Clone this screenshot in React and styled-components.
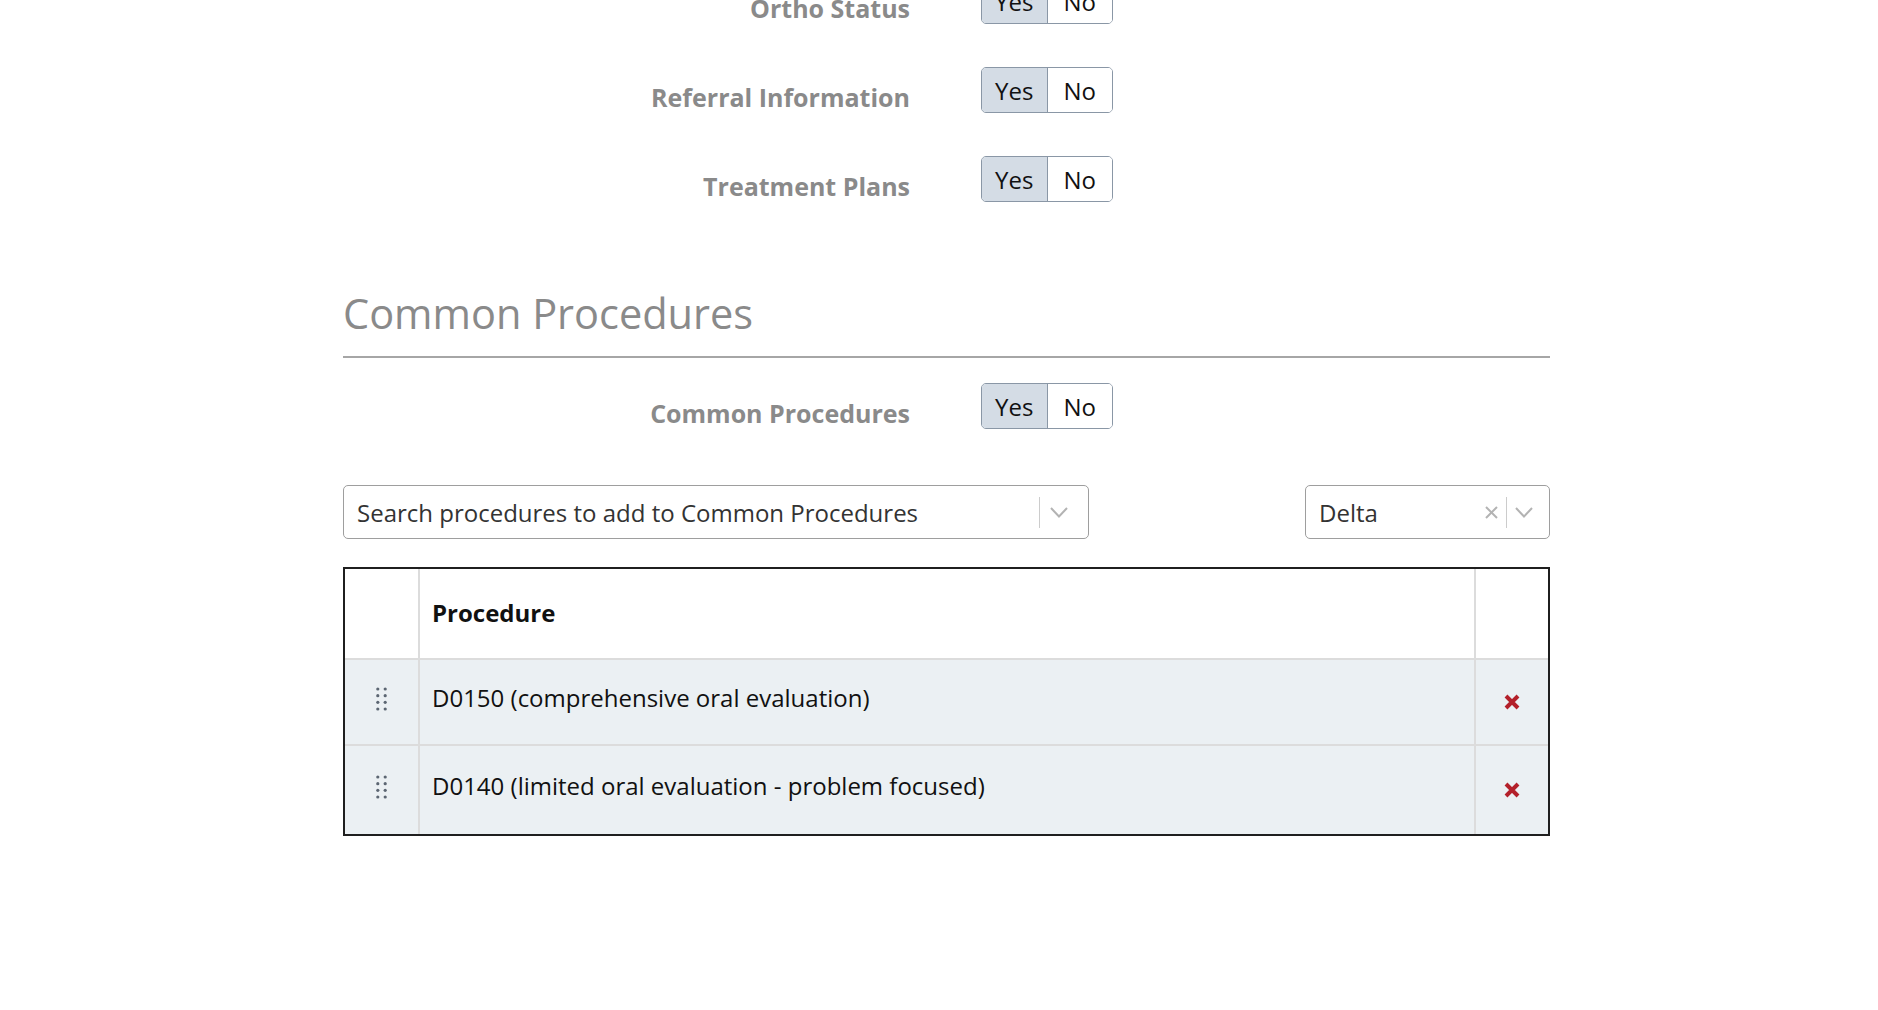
// procedure settings page
import React from 'react';
import styled, { createGlobalStyle } from 'styled-components';

const GlobalStyle = createGlobalStyle`
	html, body {
		margin: 0;
		padding: 0;
		background: #ffffff;
		font-family: 'Open Sans', 'Noto Sans', sans-serif;
		color: #111111;
	}
	* {
		box-sizing: border-box;
	}
`;

const Page = styled.div`
	width: 1207px;
	margin-left: 343px;
	padding-bottom: 80px;
`;

const Form = styled.div`
	display: flex;
	flex-direction: column;
	gap: 43px;
	margin-top: ${(p) => p.offset || 0}px;
`;

const FieldRow = styled.div`
	display: grid;
	grid-template-columns: 567px auto;
	column-gap: 71px;
	align-items: start;
	height: 46px;
`;

const Label = styled.div`
	text-align: right;
	font-size: 25px;
	line-height: 34px;
	font-weight: 700;
	color: #8a8a8a;
	padding-top: 13px;
	white-space: nowrap;
`;

const Toggle = styled.div`
	display: flex;
	width: 132px;
	height: 46px;
	border: 1px solid #8a97a6;
	border-radius: 5px;
	overflow: hidden;
`;

const ToggleOption = styled.button`
	flex: 1;
	border: none;
	border-right: ${(p) => (p.first ? '1px solid #8a97a6' : 'none')};
	background: ${(p) => (p.active ? '#d4dce5' : '#ffffff')};
	font-family: inherit;
	font-size: 24px;
	color: #111111;
	padding: 0;
	cursor: pointer;
`;

const Heading = styled.h2`
	margin: 84px 0 0;
	padding-bottom: 16px;
	border-bottom: 2px solid #a6a6a6;
	font-size: 41.5px;
	line-height: 54px;
	font-weight: 400;
	color: #8a8a8a;
`;

const SearchBar = styled.div`
	display: flex;
	justify-content: space-between;
	margin-top: 56px;
`;

const Select = styled.div`
	display: flex;
	align-items: center;
	width: ${(p) => p.width}px;
	height: 54px;
	border: 1px solid #9e9e9e;
	border-radius: 5px;
	padding: 0 ${(p) => p.padRight}px 0 13px;
	font-size: 24px;
	color: #333333;
`;

const SelectValue = styled.span`
	flex: 1;
	white-space: nowrap;
`;

const Separator = styled.span`
	width: 1px;
	height: 31px;
	background: #cccccc;
	margin: 0 ${(p) => p.gap}px;
`;

const Table = styled.div`
	margin-top: 28px;
	border: 2px solid #1f1f1f;
`;

const Row = styled.div`
	display: grid;
	grid-template-columns: 75px 1fr 72px;
	height: ${(p) => p.height}px;
	background: ${(p) => (p.header ? '#ffffff' : '#ebf0f3')};
	border-bottom: ${(p) => (p.last ? 'none' : '2px solid #dcdcdc')};
`;

const Cell = styled.div`
	display: flex;
	align-items: center;
	justify-content: ${(p) => (p.center ? 'center' : 'flex-start')};
	padding: 0 ${(p) => (p.center ? 0 : 12)}px ${(p) => p.lift || 0}px
		${(p) => (p.center ? 0 : 12)}px;
	border-right: ${(p) => (p.last ? 'none' : '2px solid #dcdcdc')};
	font-size: 24px;
	font-weight: ${(p) => (p.bold ? 700 : 400)};
	color: #111111;
`;

const Chevron = () => (
	<svg width="18" height="11" viewBox="0 0 18 11">
		<polyline points="1,1 9,9.5 17,1" fill="none" stroke="#b3b3b3" strokeWidth="2" />
	</svg>
);

const Clear = () => (
	<svg width="13" height="13" viewBox="0 0 13 13">
		<path d="M1 1 L12 12 M12 1 L1 12" stroke="#b3b3b3" strokeWidth="2" />
	</svg>
);

const DragHandle = () => (
	<svg width="11" height="24" viewBox="0 0 11 24">
		{[2, 8.7, 15.3, 22].map((y) => (
			<g key={y} fill="#5c6672">
				<circle cx="1.8" cy={y} r="1.6" />
				<circle cx="9.2" cy={y} r="1.6" />
			</g>
		))}
	</svg>
);

const RemoveIcon = () => (
	<svg width="16" height="16" viewBox="0 0 16 16">
		<path d="M2 2 L14 14 M14 2 L2 14" stroke="#b3202a" strokeWidth="4" />
	</svg>
);

const YesNo = () => (
	<Toggle>
		<ToggleOption first active>
			Yes
		</ToggleOption>
		<ToggleOption>No</ToggleOption>
	</Toggle>
);

const Field = ({ label }) => (
	<FieldRow>
		<Label>{label}</Label>
		<YesNo />
	</FieldRow>
);

const procedures = [
	{ code: 'D0150', name: 'comprehensive oral evaluation', height: 86 },
	{ code: 'D0140', name: 'limited oral evaluation - problem focused', height: 88 },
];

const App = () => {
	return (
		<Page>
			<GlobalStyle />
			<Form offset={-22}>
				<Field label="Ortho Status" />
				<Field label="Referral Information" />
				<Field label="Treatment Plans" />
			</Form>

			<Heading>Common Procedures</Heading>

			<Form offset={25}>
				<Field label="Common Procedures" />
			</Form>

			<SearchBar>
				<Select width={746} padRight={20}>
					<SelectValue>Search procedures to add to Common Procedures</SelectValue>
					<Separator gap={10} />
					<Chevron />
				</Select>
				<Select width={245} padRight={16}>
					<SelectValue>Delta</SelectValue>
					<Clear />
					<Separator gap={8} />
					<Chevron />
				</Select>
			</SearchBar>

			<Table>
				<Row header height={91}>
					<Cell />
					<Cell bold lift={2}>
						Procedure
					</Cell>
					<Cell last />
				</Row>
				{procedures.map((p, i) => (
					<Row key={p.code} height={p.height} last={i === procedures.length - 1}>
						<Cell center lift={6}>
							<DragHandle />
						</Cell>
						<Cell lift={9}>
							{p.code} ({p.name})
						</Cell>
						<Cell center last>
							<RemoveIcon />
						</Cell>
					</Row>
				))}
			</Table>
		</Page>
	);
};

export default App;
